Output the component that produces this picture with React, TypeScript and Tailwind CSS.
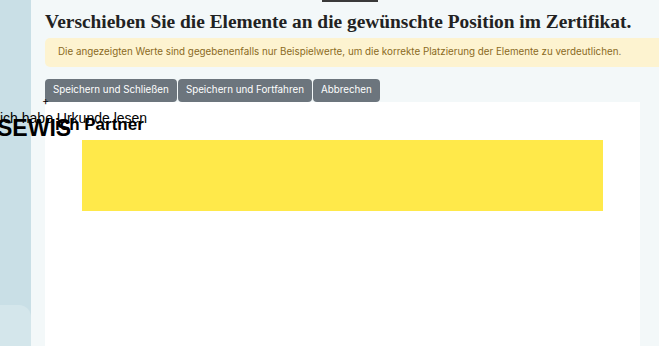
import React from "react";

const buttons = ["Speichern und Schließen", "Speichern und Fortfahren", "Abbrechen"];

const sans = { fontFamily: "'Liberation Sans', Arial, sans-serif" };

export default function App() {
  return (
    <div className="flex h-[346px] w-[659px] overflow-hidden bg-[#f3f8f9]" style={{ fontFamily: "Inter, 'Noto Sans', sans-serif" }}>
      <div className="relative w-[31px] shrink-0 bg-[#c9dfe6]">
        <div className="absolute bottom-0 left-0 h-[41px] w-full rounded-tr-[12px] bg-[#d4e6eb]" />
      </div>
      <div className="relative flex min-w-0 flex-1 flex-col pl-[14px]">
        <div className="absolute left-[291px] top-0 h-[2px] w-[56px] bg-[#3a3a3a]" />
        <h1
          className="mt-[9px] whitespace-nowrap text-[19.4px] font-bold leading-[26px] text-[#222]"
          style={{ fontFamily: "'Liberation Serif', 'DejaVu Serif', serif" }}
        >
          Verschieben Sie die Elemente an die gewünschte Position im Zertifikat.
        </h1>
        <div className="mt-[3px] -mr-[10px] flex h-[29px] items-center whitespace-nowrap rounded-l-[5px] bg-[#fdf3d0] pl-[13px] text-[9.8px] text-[#8a6a1e]">
          Die angezeigten Werte sind gegebenenfalls nur Beispielwerte, um die korrekte Platzierung der Elemente zu verdeutlichen.
        </div>
        <div className="mt-[12px] flex gap-[1px]">
          {buttons.map((b) => (
            <button
              key={b}
              className="h-[23px] whitespace-nowrap rounded-[4px] bg-[#6c757d] px-[8px] text-[9.8px] text-white"
            >
              {b}
            </button>
          ))}
        </div>
        <div className="relative mr-[19px] flex-1 bg-white">
          <span className="absolute -left-[3px] -top-[6px] text-[11px] leading-none text-black">+</span>
          <div className="absolute left-[37px] top-[38px] h-[71px] w-[521px] bg-[#ffe94a]" />
          <div className="absolute -left-[45px] top-[9px] whitespace-nowrap text-[14px] leading-none text-black" style={sans}>
            ich habe Urkunde lesen
          </div>
          <div className="absolute left-[10px] top-[14px] whitespace-nowrap text-[17px] font-bold leading-none text-black" style={sans}>
            ich Partner
          </div>
          <div className="absolute -left-[48px] top-[15px] whitespace-nowrap text-[23px] font-bold leading-none text-black" style={sans}>
            SEWIS
          </div>
        </div>
      </div>
    </div>
  );
}
